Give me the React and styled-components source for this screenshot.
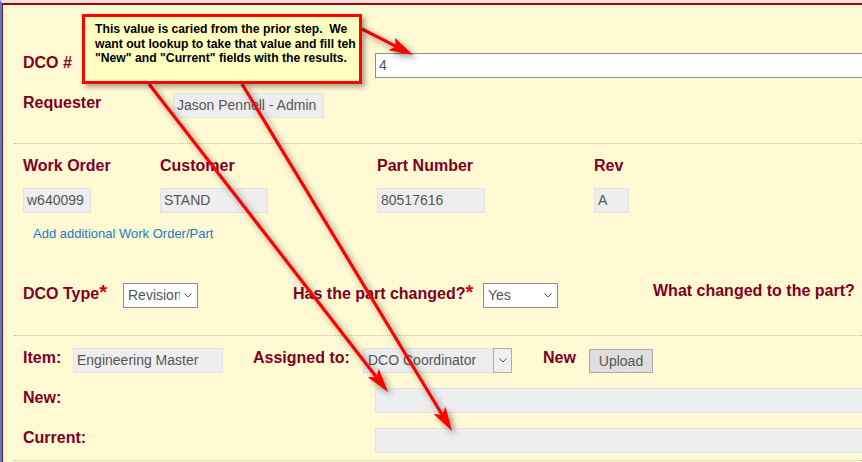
import React from 'react';
import styled, { createGlobalStyle } from 'styled-components';

const GlobalStyle = createGlobalStyle`
  body {
    margin: 0;
    font-family: "Liberation Sans", Arial, sans-serif;
  }
`;

const Screen = styled.div`
  position: relative;
  width: 862px;
  height: 462px;
  overflow: hidden;
`;

const Page = styled.div`
  box-sizing: border-box;
  height: 100%;
  border-top: 3px solid #f1dcdc;
  border-left: 2px solid #4a84d0;
`;

const Frame = styled.div`
  box-sizing: border-box;
  height: 100%;
  background: #fff9d4;
  border-top: 2px solid #8c1111;
  border-left: 1px solid #8c1111;
  padding-left: 11px;
`;

const Section = styled.div`
  padding: ${p => p.$top}px 0 ${p => p.$bottom}px 9px;
`;

const Divider = styled.div`
  border-top: 1px dotted #c4bfb2;
`;

const Row = styled.div`
  display: flex;
  align-items: center;
  margin-top: ${p => p.$mt || 0}px;
`;

const Label = styled.div`
  flex: none;
  width: ${p => (p.$w ? `${p.$w}px` : 'auto')};
  margin-left: ${p => p.$ml || 0}px;
  margin-top: ${p => (p.$raise ? -2 : 0)}px;
  margin-bottom: ${p => p.$lift ?? 6}px;
  font-size: 16px;
  line-height: 18px;
  font-weight: bold;
  color: #800020;
  white-space: nowrap;
`;

const Asterisk = styled.span`
  color: #d40000;
  font-size: 20px;
  line-height: 0;
`;

const ReadBox = styled.div`
  box-sizing: border-box;
  flex: none;
  width: ${p => p.$w}px;
  height: 25px;
  padding: 0 3px;
  background: #eeeeee;
  border: 1px solid #e2e2e2;
  color: #555;
  font-size: 14px;
  line-height: 23px;
  white-space: nowrap;
  overflow: hidden;
`;

const TextInput = styled.div`
  box-sizing: border-box;
  flex: none;
  width: 500px;
  height: 25px;
  padding: 0 3px;
  background: #fff;
  border: 1px solid #8d8d8d;
  color: #4f5560;
  font-size: 14px;
  line-height: 23px;
`;

const Columns = styled.div`
  display: flex;
`;

const Column = styled.div`
  flex: none;
  width: ${p => (p.$w ? `${p.$w}px` : 'auto')};
  display: flex;
  flex-direction: column;
  align-items: flex-start;
  gap: 13px;
`;

const AddLink = styled.a`
  display: block;
  width: fit-content;
  margin: 13px 0 0 10px;
  font-size: 13px;
  line-height: 15px;
  color: #1d79c7;
  text-decoration: none;
`;

const SelectBox = styled.div`
  box-sizing: border-box;
  flex: none;
  display: flex;
  align-items: center;
  width: ${p => p.$w}px;
  height: 25px;
  margin-left: ${p => p.$ml || 0}px;
  padding-left: 4px;
  background: ${p => (p.$disabled ? '#ededed' : '#fff')};
  border: 1px solid ${p => (p.$disabled ? '#e0e0e0' : '#8e8e8e')};
  color: #555;
  font-size: 14px;
`;

const SelectText = styled.span`
  flex: 1;
  min-width: 0;
  overflow: hidden;
  white-space: nowrap;
  line-height: 23px;
`;

const ChevronSlot = styled.span`
  display: flex;
  margin: 0 5px 0 4px;
`;

const DropButton = styled.span`
  flex: none;
  align-self: stretch;
  width: 17px;
  margin: -1px -1px -1px 0;
  display: flex;
  align-items: center;
  justify-content: center;
  background: #efefef;
  border: 1px solid #adadad;
`;

const UploadButton = styled.button`
  box-sizing: border-box;
  flex: none;
  width: 64px;
  height: 24px;
  padding: 0;
  background: #dedede;
  border: 1px solid #ababab;
  color: #555;
  font-family: "Liberation Sans", Arial, sans-serif;
  font-size: 14px;
`;

const Callout = styled.div`
  position: absolute;
  left: 82px;
  top: 14px;
  z-index: 2;
  box-sizing: border-box;
  width: 280px;
  height: 70px;
  padding: 5px 0 0 10px;
  background: #ffffc0;
  border: 3px solid #ff0000;
  box-shadow: 3px 3px 5px rgba(0, 0, 0, 0.35);
  color: #000;
  font-size: 12.2px;
  font-weight: bold;
  line-height: 14.6px;
  white-space: nowrap;
`;

const ArrowLayer = styled.svg`
  position: absolute;
  left: 0;
  top: 0;
  z-index: 1;
  pointer-events: none;
  filter: drop-shadow(3px 3px 3px rgba(0, 0, 0, 0.45));
`;

const Chevron = () => (
  <svg width="8" height="5" viewBox="0 0 8 5">
    <path d="M0.5 0.5 L4 4 L7.5 0.5" fill="none" stroke="#555" strokeWidth="1" />
  </svg>
);

function Select({ w, ml, value, disabled }) {
  return (
    <SelectBox $w={w} $ml={ml} $disabled={disabled}>
      <SelectText>{value}</SelectText>
      {disabled ? (
        <DropButton><Chevron /></DropButton>
      ) : (
        <ChevronSlot><Chevron /></ChevronSlot>
      )}
    </SelectBox>
  );
}

const arrows = [
  { from: [362, 29], to: [413, 55] },
  { from: [149, 84], to: [388, 392] },
  { from: [242, 84], to: [452, 431] },
];

function arrowShape({ from, to }, len = 24, hw = 7) {
  const [x1, y1] = from;
  const [x2, y2] = to;
  const d = Math.hypot(x2 - x1, y2 - y1);
  const ux = (x2 - x1) / d;
  const uy = (y2 - y1) / d;
  const bx = x2 - ux * len;
  const by = y2 - uy * len;
  const nx = x2 - ux * (len - 5);
  const ny = y2 - uy * (len - 5);
  const pts = [
    [x2, y2],
    [bx - uy * hw, by + ux * hw],
    [nx, ny],
    [bx + uy * hw, by - ux * hw],
  ];
  return { line: [x1, y1, nx, ny], head: pts.map(p => p.join(',')).join(' ') };
}

function Arrows() {
  return (
    <ArrowLayer width="862" height="462" viewBox="0 0 862 462">
      {arrows.map((a, i) => {
        const s = arrowShape(a);
        return (
          <g key={i}>
            <line x1={s.line[0]} y1={s.line[1]} x2={s.line[2]} y2={s.line[3]} stroke="#ff0000" strokeWidth="3.2" />
            <polygon points={s.head} fill="#ff0000" />
          </g>
        );
      })}
    </ArrowLayer>
  );
}

export default function App() {
  return (
    <Screen>
      <GlobalStyle />
      <Page>
        <Frame>
          <Section $top={48} $bottom={25}>
            <Row>
              <Label $w={352}>DCO #</Label>
              <TextInput>4</TextInput>
            </Row>
            <Row $mt={15}>
              <Label $w={150}>Requester</Label>
              <ReadBox $w={151}>Jason Pennell - Admin</ReadBox>
            </Row>
          </Section>
          <Divider />
          <Section $top={13} $bottom={27}>
            <Columns>
              <Column $w={137}>
                <Label $lift={0}>Work Order</Label>
                <ReadBox $w={68}>w640099</ReadBox>
              </Column>
              <Column $w={217}>
                <Label $lift={0}>Customer</Label>
                <ReadBox $w={108}>STAND</ReadBox>
              </Column>
              <Column $w={217}>
                <Label $lift={0}>Part Number</Label>
                <ReadBox $w={108}>80517616</ReadBox>
              </Column>
              <Column>
                <Label $lift={0}>Rev</Label>
                <ReadBox $w={35}>A</ReadBox>
              </Column>
            </Columns>
            <AddLink href="#">Add additional Work Order/Part</AddLink>
            <Row $mt={42}>
              <Label $w={100} $lift={3}>DCO Type<Asterisk>*</Asterisk></Label>
              <Select w={75} value="Revision" />
              <Label $w={190} $ml={95} $lift={3}>Has the part changed?<Asterisk>*</Asterisk></Label>
              <Select w={75} value="Yes" />
              <Label $ml={95} $lift={7} $raise>What changed to the part?</Label>
            </Row>
          </Section>
          <Divider />
          <Section $top={12} $bottom={7}>
            <Row>
              <Label $w={50}>Item:</Label>
              <ReadBox $w={150}>Engineering Master</ReadBox>
              <Label $w={110} $ml={30}>Assigned to:</Label>
              <Select w={149} value="DCO Coordinator" disabled />
              <Label $w={46} $ml={31}>New</Label>
              <UploadButton>Upload</UploadButton>
            </Row>
            <Row $mt={15}>
              <Label $w={352}>New:</Label>
              <ReadBox $w={500} />
            </Row>
            <Row $mt={15}>
              <Label $w={352}>Current:</Label>
              <ReadBox $w={500} />
            </Row>
          </Section>
          <Divider />
        </Frame>
      </Page>
      <Arrows />
      <Callout>
        This value is caried from the prior step.&nbsp; We<br />
        want out lookup to take that value and fill teh<br />
        "New" and "Current" fields with the results.
      </Callout>
    </Screen>
  );
}
